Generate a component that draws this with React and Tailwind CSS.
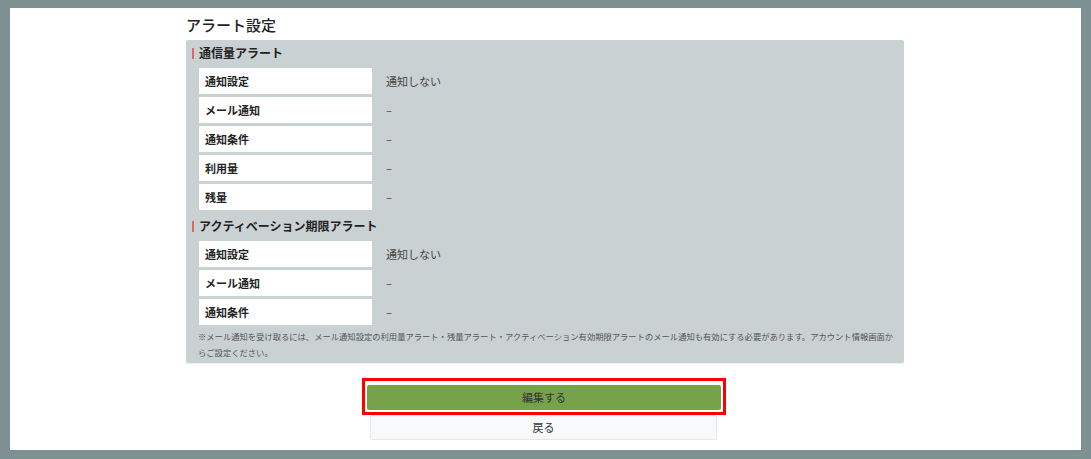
const sections = [
  {
    title: '通信量アラート',
    rows: [
      ['通知設定', '通知しない'],
      ['メール通知', '–'],
      ['通知条件', '–'],
      ['利用量', '–'],
      ['残量', '–'],
    ],
  },
  {
    title: 'アクティベーション期限アラート',
    rows: [
      ['通知設定', '通知しない'],
      ['メール通知', '–'],
      ['通知条件', '–'],
    ],
  },
];

const Section = ({ title, rows }) => (
  <div>
    <div className="flex items-center h-[14px] pl-[6px]">
      <span className="w-[2px] h-[11px] bg-[#e06666] mr-[5px]"></span>
      <span className="text-[12px] font-bold text-[#222]">{title}</span>
    </div>
    <div className="mt-[8px] pl-[13px] flex flex-col gap-[3px]">
      {rows.map(([label, value], i) => (
        <div key={i} className="flex items-center">
          <div className="w-[173px] h-[26px] bg-white flex items-center pl-[6px] text-[11px] font-bold text-[#222]">
            {label}
          </div>
          <div className="pl-[14px] text-[11px] text-[#444]">{value}</div>
        </div>
      ))}
    </div>
  </div>
);

export default function App() {
  return (
    <div
      className="w-[1091px] h-[459px] bg-[#7d9193] pt-[8px] pl-[10px] pr-[10px] pb-[9px]"
      style={{ fontFamily: '"Noto Sans CJK JP", "Noto Sans", sans-serif' }}
    >
      <div className="h-full bg-white pl-[176px] pt-[8px]">
        <div className="w-[718px]">
          <h1 className="text-[15px] font-medium text-[#222] leading-[18px] h-[24px]">アラート設定</h1>
          <div className="bg-[#c9d1d3] rounded-[2px] shadow-[0_1px_1px_rgba(0,0,0,0.08)] pt-[6px] pb-[3px]">
            <Section {...sections[0]} />
            <div className="h-[9px]"></div>
            <Section {...sections[1]} />
            <p className="mt-[3px] pl-[12px] pr-[8px] text-[8.3px] leading-[16px] text-[#555]">
              ※メール通知を受け取るには、メール通知設定の利用量アラート・残量アラート・アクティベーション有効期限アラートのメール通知も有効にする必要があります。アカウント情報画面からご設定ください。
            </p>
          </div>
          <div className="mt-[15px] flex flex-col items-center">
            <div className="border-[3px] border-[#ff0000] p-[2px] w-[364px] -ml-[2px]">
              <button className="w-full h-[25px] bg-[#76a34a] rounded-[2px] text-[11px] text-[#333]">
                編集する
              </button>
            </div>
            <button className="w-[347px] h-[25px] bg-[#f7f9fb] border border-[#e5e8eb] rounded-[2px] text-[11px] text-[#333] -ml-[3px]">
              戻る
            </button>
          </div>
        </div>
      </div>
    </div>
  );
}
